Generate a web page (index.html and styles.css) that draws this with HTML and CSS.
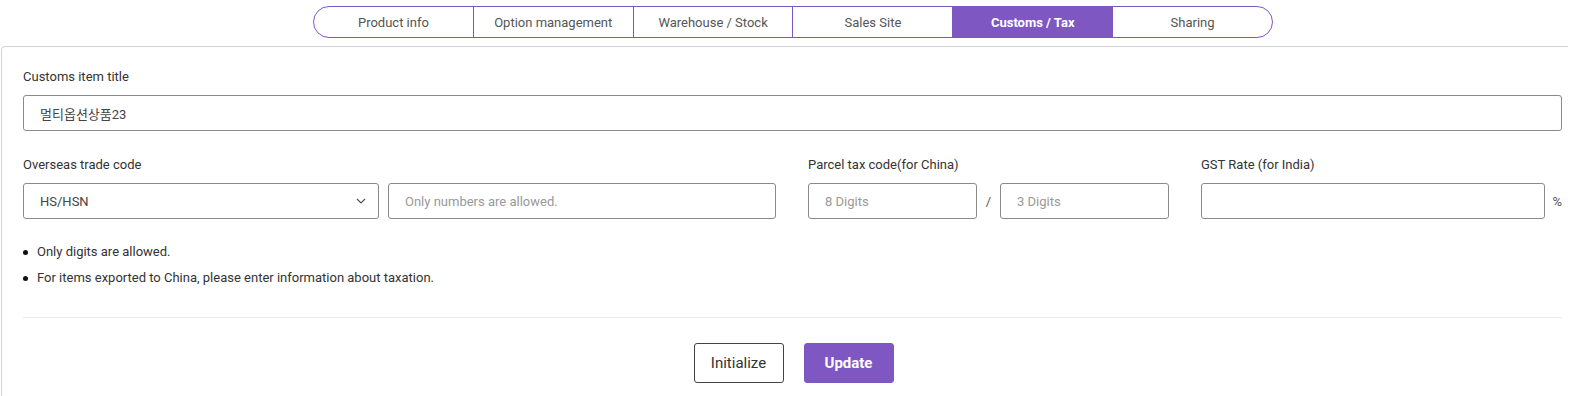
FILE: index.html
```html
<!DOCTYPE html>
<html>
<head>
<meta charset="utf-8">
<link rel="stylesheet" href="styles.css">
</head>
<body>
<div class="tabs">
  <div class="tab">Product info</div>
  <div class="tab">Option management</div>
  <div class="tab">Warehouse / Stock</div>
  <div class="tab">Sales Site</div>
  <div class="tab active">Customs / Tax</div>
  <div class="tab">Sharing</div>
</div>
<div class="panel">
  <div class="label">Customs item title</div>
  <div class="input full">멀티옵션상품23</div>
  <div class="row">
    <div class="col">
      <div class="label">Overseas trade code</div>
      <div class="group">
        <div class="input select">HS/HSN
          <svg class="chev" width="10" height="6" viewBox="0 0 10 6"><path d="M1 1l4 4 4-4" fill="none" stroke="#555" stroke-width="1.2"/></svg>
        </div>
        <div class="input grow ph">Only numbers are allowed.</div>
      </div>
    </div>
    <div class="col">
      <div class="label">Parcel tax code(for China)</div>
      <div class="group">
        <div class="input grow ph">8 Digits</div>
        <span class="sep">/</span>
        <div class="input grow ph">3 Digits</div>
      </div>
    </div>
    <div class="col">
      <div class="label">GST Rate (for India)</div>
      <div class="group">
        <div class="input grow"></div>
        <span class="pct">%</span>
      </div>
    </div>
  </div>
  <ul class="notes">
    <li>Only digits are allowed.</li>
    <li>For items exported to China, please enter information about taxation.</li>
  </ul>
  <div class="divider"></div>
  <div class="buttons">
    <button class="btn outline">Initialize</button>
    <button class="btn primary">Update</button>
  </div>
</div>
</body>
</html>
```
FILE: styles.css
```css
* { box-sizing: border-box; }
body {
  margin: 0;
  font-family: Roboto, "Noto Sans CJK KR", sans-serif;
  font-size: 13px;
  color: #333;
  background: #fff;
}
.tabs {
  display: flex;
  width: 960px;
  height: 32px;
  margin: 6px 0 0 313px;
  border: 1px solid #7e57c2;
  border-radius: 16px;
  overflow: hidden;
}
.tab {
  flex: 1;
  display: flex;
  align-items: center;
  justify-content: center;
  color: #555;
  font-size: 13px;
  border-left: 1px solid #7e57c2;
}
.tab:first-child { border-left: none; }
.tab.active {
  background: #7e57c2;
  color: #fff;
  font-weight: 700;
}
.panel {
  margin: 8px 5px 0 1px;
  border: 1px solid #d4d4d4;
  border-bottom: none;
  border-right: none;
  border-radius: 4px 0 0 0;
  padding: 22px 6px 0 21px;
  height: 350px;
}
.label {
  font-size: 13px;
  line-height: 16px;
  color: #333;
  margin-bottom: 10px;
}
.input {
  height: 36px;
  border: 1px solid #8a8a8a;
  border-radius: 3px;
  display: flex;
  align-items: center;
  padding: 0 16px;
  font-size: 13px;
  color: #444;
}
.input.ph { color: #999; }
.row {
  display: grid;
  grid-template-columns: 753px 361px 1fr;
  column-gap: 32px;
  margin-top: 26px;
}
.group {
  display: flex;
  align-items: center;
}
.select {
  width: 356px;
  margin-right: 9px;
  justify-content: space-between;
  padding-right: 12px;
}
.grow { flex: 1; }
.sep {
  width: 23px;
  text-align: center;
  color: #555;
}
.pct {
  width: 17px;
  text-align: right;
  color: #555;
}
.notes {
  list-style: none;
  margin: 20px 0 0 0;
  padding: 0;
}
.notes li {
  line-height: 26px;
  font-size: 13px;
  color: #333;
  display: flex;
  align-items: center;
}
.notes li::before {
  content: "";
  width: 5px;
  height: 5px;
  border-radius: 50%;
  background: #111;
  margin-right: 9px;
}
.divider {
  height: 1px;
  background: #ebebeb;
  margin-top: 26px;
}
.buttons {
  display: flex;
  justify-content: center;
  gap: 20px;
  margin-top: 25px;
  padding-left: 2px;
}
.btn {
  width: 90px;
  height: 40px;
  border-radius: 3px;
  font-family: Roboto, sans-serif;
  font-size: 15px;
}
.btn.outline {
  background: #fff;
  border: 1px solid #444;
  color: #333;
}
.btn.primary {
  background: #7e57c2;
  border: 1px solid #7e57c2;
  color: #fff;
  font-weight: 700;
}
```
